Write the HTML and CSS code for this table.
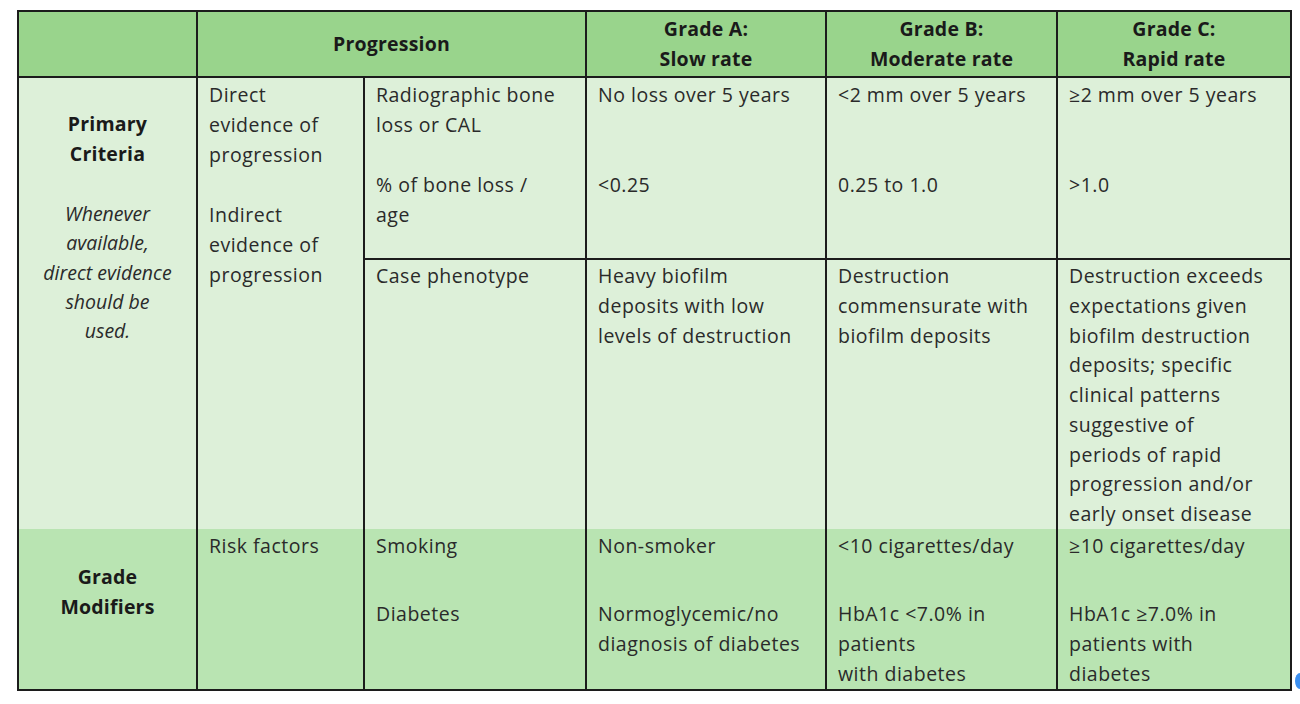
FILE: index.html
```html
<!DOCTYPE html>
<html>
<head>
<meta charset="utf-8">
<link rel="stylesheet" href="styles.css">
</head>
<body>
<div class="page">
<table class="grid">
  <colgroup>
    <col class="c1"><col class="c2"><col class="c3"><col class="c4"><col class="c5"><col class="c6">
  </colgroup>
  <tr class="head">
    <th></th>
    <th colspan="2">Progression</th>
    <th>Grade A:<br>Slow rate</th>
    <th>Grade B:<br>Moderate rate</th>
    <th>Grade C:<br>Rapid rate</th>
  </tr>
  <tr class="r1">
    <td rowspan="3" class="side">
      <div class="side-title">Primary<br>Criteria</div>
      <div class="side-note">Whenever<br>available,<br>direct evidence<br>should be<br>used.</div>
    </td>
    <td>Direct<br>evidence of<br>progression</td>
    <td>Radiographic bone<br>loss or CAL</td>
    <td>No loss over 5 years</td>
    <td>&lt;2 mm over 5 years</td>
    <td>≥2 mm over 5 years</td>
  </tr>
  <tr class="r2">
    <td rowspan="2" class="indirect">Indirect<br>evidence of<br>progression</td>
    <td>% of bone loss /<br>age</td>
    <td>&lt;0.25</td>
    <td>0.25 to 1.0</td>
    <td>&gt;1.0</td>
  </tr>
  <tr class="r3">
    <td class="topline">Case phenotype</td>
    <td class="topline">Heavy biofilm<br>deposits with low<br>levels of destruction</td>
    <td class="topline">Destruction<br>commensurate with<br>biofilm deposits</td>
    <td class="topline">Destruction exceeds<br>expectations given<br>biofilm destruction<br>deposits; specific<br>clinical patterns<br>suggestive of<br>periods of rapid<br>progression and/or<br>early onset disease</td>
  </tr>
  <tr class="r4">
    <td class="side"><div class="side-title">Grade<br>Modifiers</div></td>
    <td>Risk factors</td>
    <td><p class="first">Smoking</p><p class="second">Diabetes</p></td>
    <td><p class="first">Non-smoker</p><p class="second">Normoglycemic/no<br>diagnosis of diabetes</p></td>
    <td><p class="first">&lt;10 cigarettes/day</p><p class="second">HbA1c &lt;7.0% in<br>patients<br>with diabetes</p></td>
    <td><p class="first">≥10 cigarettes/day</p><p class="second">HbA1c ≥7.0% in<br>patients with<br>diabetes</p></td>
  </tr>
</table>
<span class="blip"></span>
</div>
</body>
</html>
```
FILE: styles.css
```css
html, body {
  margin: 0;
  padding: 0;
  background: #ffffff;
}
.page {
  position: relative;
  width: 1300px;
  height: 704px;
  overflow: hidden;
  padding: 10px 0 0 17px;
  box-sizing: border-box;
}
.grid {
  border-collapse: collapse;
  table-layout: fixed;
  width: 1273px;
  font-family: "Open Sans", "Lato", sans-serif;
  font-size: 19.5px;
  letter-spacing: 0.5px;
  line-height: 30px;
  color: #2a2a2a;
  border: 2px solid #1c1c1c;
}
.c1 { width: 179px; }
.c2 { width: 167px; }
.c3 { width: 222px; }
.c4 { width: 240px; }
.c5 { width: 231px; }
.c6 { width: 234px; }
.grid th, .grid td {
  border-left: 2px solid #1c1c1c;
  border-right: 2px solid #1c1c1c;
  padding: 0 2px 0 11px;
  vertical-align: top;
  text-align: left;
  white-space: nowrap;
  overflow: visible;
}
.grid th {
  background: #99d48c;
  font-weight: 700;
  text-align: center;
  vertical-align: middle;
  padding: 0;
  height: 64px;
  border-bottom: 2px solid #1c1c1c;
  color: #1a1a1a;
  letter-spacing: 0.2px;
}
.r1 td, .r2 td, .r3 td { background: #ddf0d9; }
.r4 td { background: #b9e4b2; }
.grid .r1 td { height: 85px; padding-top: 2px; }
.grid .r2 td { height: 88px; }
.grid .r3 td { height: 268px; padding-top: 1px; line-height: 29.75px; }
.grid .r3 td.side { line-height: 30px; }
.grid .r4 td { height: 157px; padding-top: 2px; }
.topline { border-top: 2px solid #1c1c1c; }
.grid td.side {
  text-align: center;
  padding: 31px 2px 0 2px;
  letter-spacing: 0;
}
.grid .r4 td.side {
  height: 126px;
  padding-top: 33px;
}
.side-title {
  font-weight: 700;
  color: #1a1a1a;
  letter-spacing: 0.2px;
}
.side-note {
  margin-top: 30px;
  font-style: italic;
  line-height: 29.3px;
}
.grid td.indirect {
  padding-top: 30px;
}
.grid p {
  margin: 0;
}
.grid p.second {
  margin-top: 38px;
}
.blip {
  position: absolute;
  left: 1295px;
  top: 673px;
  width: 10px;
  height: 16px;
  border-radius: 50%;
  background: #3b8ff0;
}
```
